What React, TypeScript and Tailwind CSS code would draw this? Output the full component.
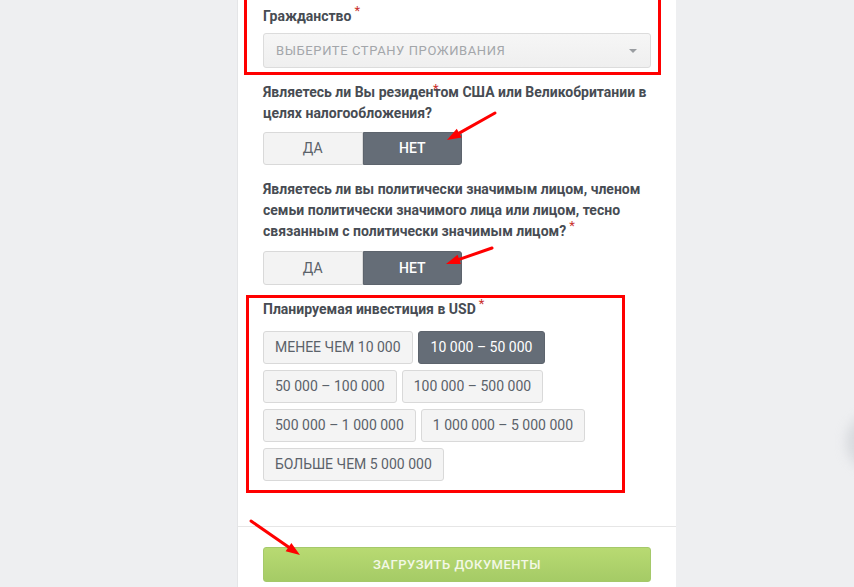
import React from 'react';

type Pt = [number, number];

const Arrow = ({ from, to }: { from: Pt; to: Pt }) => {
  const [x1, y1] = from;
  const [x2, y2] = to;
  const len = Math.hypot(x2 - x1, y2 - y1);
  const ux = (x2 - x1) / len;
  const uy = (y2 - y1) / len;
  const head = 14;
  const bx = x2 - ux * head;
  const by = y2 - uy * head;
  const px = -uy * 5;
  const py = ux * 5;
  return (
    <g>
      <line x1={x1} y1={y1} x2={bx} y2={by} stroke="#f00" strokeWidth={3} strokeLinecap="round" />
      <polygon points={`${x2},${y2} ${bx + px},${by + py} ${bx - px},${by - py}`} fill="#f00" />
    </g>
  );
};

const Req = () => <span className="relative -top-[6px] ml-[3px] text-[13px] font-normal text-[#c9302c]">*</span>;

const Toggle = ({ h }: { h: string }) => (
  <div className={`flex w-[199px] text-[14px] ${h}`}>
    <button className="flex-1 rounded-l-[3px] border border-[#d9d9d9] bg-[#f3f3f3] text-[#5b626a]">ДА</button>
    <button className="flex-1 rounded-r-[3px] border border-[#5d646d] bg-[#656d77] font-medium text-white">НЕТ</button>
  </div>
);

const amounts = [
  'МЕНЕЕ ЧЕМ 10 000',
  '10 000 – 50 000',
  '50 000 – 100 000',
  '100 000 – 500 000',
  '500 000 – 1 000 000',
  '1 000 000 – 5 000 000',
  'БОЛЬШЕ ЧЕМ 5 000 000',
];

const rows = [[0, 1], [2, 3], [4, 5], [6]];

export default function App() {
  return (
    <div className="relative h-[587px] w-[854px] overflow-hidden bg-[#eeeff1] font-['Roboto',sans-serif]">
      <div className="ml-[237px] h-full w-[439px] border-l border-[#e4e5e7] bg-white">
        <div className="px-[25px]">
          {/* citizenship */}
          <div className="relative pt-[6px]">
            <div className="pointer-events-none absolute -left-[19px] -right-[10px] -top-[4px] bottom-[-7px] border-[3px] border-[#f00]" />
            <p className="text-[14px] font-bold leading-[20px] text-[#474c53]">
              Гражданство<Req />
            </p>
            <div className="mt-[6px] flex h-[35px] items-center justify-between rounded-[3px] border border-[#dcdcdc] bg-gradient-to-b from-[#f6f6f6] to-[#efefef] pl-[12px] pr-[13px]">
              <span className="text-[13px] tracking-[0.6px] text-[#a3a6aa]">ВЫБЕРИТЕ СТРАНУ ПРОЖИВАНИЯ</span>
              <span className="h-0 w-0 border-x-[4px] border-t-[4px] border-x-transparent border-t-[#9a9da1]" />
            </div>
          </div>

          {/* tax resident */}
          <div className="relative mt-[14px]">
            <p className="text-[14px] font-bold leading-[21px] text-[#474c53]">
              Являетесь ли Вы резидентом США или Великобритании в целях налогообложения?
            </p>
            <span className="absolute left-[170px] top-[-3px] text-[13px] text-[#c9302c]">*</span>
          </div>
          <div className="mt-[8px]">
            <Toggle h="h-[33px]" />
          </div>

          {/* PEP */}
          <p className="mt-[14px] text-[14px] font-bold leading-[21px] text-[#474c53]">
            Являетесь ли вы политически значимым лицом, членом семьи политически значимого лица или лицом, тесно связанным с политически значимым лицом?<Req />
          </p>
          <div className="mt-[9px]">
            <Toggle h="h-[34px]" />
          </div>

          {/* investment */}
          <div className="relative mt-[14px]">
            <div className="pointer-events-none absolute -left-[17px] right-[26px] -top-[4px] bottom-[-12px] border-[3px] border-[#f00]" />
            <p className="text-[14px] font-bold leading-[21px] text-[#474c53]">
              Планируемая инвестиция в USD<Req />
            </p>
            <div className="mt-[11px] flex flex-col gap-[6px]">
              {rows.map((r, i) => (
                <div key={i} className="flex gap-[5px]">
                  {r.map((idx) =>
                    idx === 1 ? (
                      <button
                        key={idx}
                        className="h-[33px] rounded-[3px] border border-[#5d646d] bg-[#656d77] px-[12px] text-[14px] text-white"
                      >
                        {amounts[idx]}
                      </button>
                    ) : (
                      <button
                        key={idx}
                        className="h-[33px] rounded-[3px] border border-[#d9d9d9] bg-[#f4f4f4] px-[11px] text-[14px] text-[#5b626a]"
                      >
                        {amounts[idx]}
                      </button>
                    )
                  )}
                </div>
              ))}
            </div>
          </div>
        </div>

        <div className="mt-[45px] border-t border-[#e6e6e6] px-[25px] pt-[20px]">
          <button className="h-[35px] w-full rounded-[3px] border border-[#a5c96a] bg-gradient-to-b from-[#b8da72] to-[#a5cb66] text-[13px] font-medium tracking-[0.5px] text-[#f3f8e6]">
            ЗАГРУЗИТЬ ДОКУМЕНТЫ
          </button>
        </div>
      </div>

      <div className="absolute left-[846px] top-[412px] h-[60px] w-[60px] rounded-full bg-[#c9ccd1] opacity-60 blur-[6px]" />

      <svg className="pointer-events-none absolute left-0 top-0" width={854} height={587}>
        <Arrow from={[495, 113]} to={[447, 140]} />
        <Arrow from={[492, 248]} to={[446, 264]} />
        <Arrow from={[251, 521]} to={[300, 555]} />
      </svg>
    </div>
  );
}
